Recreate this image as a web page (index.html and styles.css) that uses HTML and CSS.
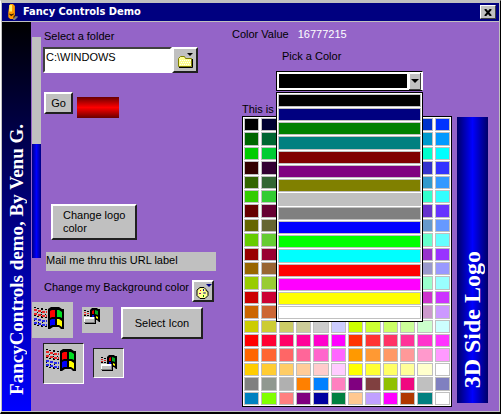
FILE: index.html
```html
<!DOCTYPE html>
<html lang="en">
<head>
<meta charset="utf-8">
<title>Fancy Controls Demo</title>
<link rel="stylesheet" href="styles.css">
</head>
<body>
<svg class="defs" aria-hidden="true">
  <symbol id="flag" viewBox="0 0 32 24">
    <g fill="none" shape-rendering="crispEdges">
      <path stroke="#000" stroke-dasharray="2 2" d="M1 1.500h4M4 2.500h7M8 3.500h7M1 9.500h4M4 10.500h7M8 11.500h7M1 18.500h4M4 19.500h7M8 20.500h7"/>
      <path stroke="#000" stroke-dasharray="1 3" d="M1 4.500h4M4 6.500h7M8 8.500h7M1 14.500h4M5 16.500h7M9 18.500h6"/>
      <path stroke="#e82828" stroke-width="2" stroke-dasharray="3 1" d="M1 4h3M5 5h4M9 6h5M1 8h3M5 9h4M9 10h5"/>
      <path stroke="#2828e8" stroke-width="2" stroke-dasharray="3 1" d="M1 13h3M5 14h4M9 15h5M1 17h3M5 18h4M9 19h5"/>
    </g>
    <path fill="#000" d="M15 3l3-2h8l3 2h2v20h-3l-2-2h-6l-3 2h-2z"/>
    <path fill="#f00" d="M17 5l2-1h3v7h-3l-2 1z"/>
    <path fill="#0d2" d="M24 4h2l3 2v6l-2-1h-3z"/>
    <path fill="#00f" d="M17 14l2-1h3v6h-3l-2 1z"/>
    <path fill="#ff0" d="M24 13h2l3 2v6l-3-2h-2z"/>
  </symbol>
  <symbol id="drive" viewBox="0 0 17 17">
    <g fill="none" shape-rendering="crispEdges">
      <path stroke="#000" stroke-dasharray="2 1" d="M1 2.500h3M4 3.500h4M1 7.500h7"/>
      <path stroke="#e02020" stroke-dasharray="2 1" d="M1 4.500h3M4 5.500h4M1 6.500h3"/>
    </g>
    <path fill="#000" d="M7 2l2-2h5l1 1h2v13h-1l-2-2h-2V9H7z"/>
    <path fill="#d00" d="M9 3l2-1v4H9z"/>
    <path fill="#0a2" d="M12 2l3 1v4l-3-1z"/>
    <path fill="#00d" d="M9 7h2v2H9z"/>
    <path fill="#ff0" d="M13 8l2 1v2l-2-1z"/>
    <g shape-rendering="crispEdges">
      <path fill="#000" d="M2 10h11v6H2z"/>
      <path fill="#808080" d="M1 9h11v6H1z"/>
      <path fill="#fff" d="M1 9h10v5H1z"/>
      <path fill="#c0c0c0" d="M2 11h9v3H2z"/>
    </g>
  </symbol>
</svg>
<main class="window">
  <header class="titlebar">
    <svg class="app-icon" viewBox="0 0 12 17" aria-hidden="true">
      <path fill="#808080" d="M7 13h4v1l-3 3H6z"/>
      <path fill="#f90" d="M2 2l1-2h3l2 2v11l-2 3H3l-2-2V9z"/>
      <path fill="#fe6" d="M2 1h3v7H2z"/>
      <path fill="#402000" d="M2 10l2 1 3-1v1l-3 2-2-2zM7 12h1v2l-2 1z"/>
    </svg>
    <h1>Fancy Controls Demo</h1>
    <button class="close" type="button" aria-label="Close">
      <svg viewBox="0 0 8 7" aria-hidden="true"><path d="M1 0l6 7M7 0L1 7" stroke="#000" stroke-width="2"/></svg>
    </button>
  </header>
  <div class="client">
    <aside class="logo logo-left"><span>FancyControls demo, By Venu G.</span></aside>
    <div class="gauge"><div class="gauge-fill"></div></div>
    <section class="left">
      <label for="folder">Select a folder</label>
      <div class="folder-row">
        <input id="folder" type="text" value="C:\WINDOWS">
        <button class="raised browse" type="button" aria-label="Browse">
          <svg viewBox="0 0 17 17" aria-hidden="true">
            <path fill="#ffff90" stroke="#808000" d="M1.500 6.500l2-2h4l1 2h6v8h-13z"/>
            <path fill="none" stroke="#000" d="M2 15.500h13.500V7"/>
            <path stroke="#fff" stroke-dasharray="1 1" d="M3 8.500h11M4 10.500h10M3 12.500h11"/>
            <path fill="#000" d="M10 1h6l-3 3z"/>
          </svg>
        </button>
      </div>
      <div class="go-row">
        <button class="raised go" type="button">Go</button>
        <div class="red-bar"></div>
      </div>
      <button class="raised change-logo" type="button">Change logo<br>color</button>
      <a class="url" href="#mail">Mail me thru this URL label</a>
      <div class="background-row">
        <label for="background">Change my Background color</label>
        <button class="raised palette-button" id="background" type="button">
          <svg viewBox="0 0 17 17" aria-hidden="true">
            <path fill="#ffff90" stroke="#000" d="M5 4.500h4l2 2v1l2 1v4l-3 3H5l-3-3V7z"/>
            <path fill="#000080" d="M11 1h6l-3 3z"/>
            <path fill="#f00" d="M5 7h1v1H5z"/><path fill="#00a" d="M8 6h1v2H8z"/>
            <path fill="#080" d="M8 12h1v2H8z"/><path fill="#808" d="M4 10h2v1H4z"/>
            <path fill="#fff" stroke="#808080" d="M8.500 9.500h2v1h-2z"/>
          </svg>
        </button>
      </div>
      <div class="icon-area">
        <div class="icon-row">
          <div class="tile large"><svg><use href="#flag"/></svg></div>
          <div class="tile small"><svg><use href="#drive"/></svg></div>
          <button class="raised select-icon" type="button">Select Icon</button>
        </div>
        <div class="icon-row pressed-row">
          <div class="tile large pressed"><svg><use href="#flag"/></svg></div>
          <div class="tile small pressed"><svg><use href="#drive"/></svg></div>
        </div>
      </div>
    </section>
    <section class="right">
      <p class="value">Color Value <output>16777215</output></p>
      <label class="pick" for="color">Pick a Color</label>
      <div class="combo">
        <select id="color"><option>Black</option></select>
        <svg class="arrow" viewBox="0 0 12 17" aria-hidden="true">
          <path fill="#c0c0c0" d="M0 0h12v17H0z"/>
          <path stroke="#fff" fill="none" d="M.5 16V.5H11"/>
          <path stroke="#404040" fill="none" d="M0 16.500h11.500V0"/>
          <path fill="#000" d="M2 6h8l-4 4z"/>
        </svg>
        <ul class="drop" id="drop"></ul>
      </div>
      <p class="caption">This is</p>
      <div class="palette" id="palette"></div>
    </section>
    <aside class="logo logo-right"><span>3D Side Logo</span></aside>
  </div>
</main>
<script src="script.js"></script>
</body>
</html>
```
FILE: styles.css
```css
* { box-sizing: border-box; }

body {
  margin: 0;
  background: #c0c0c0;
  color: #000;
  font: 11px/14px "Liberation Sans", Arial, sans-serif;
}

h1, p, ul { margin: 0; padding: 0; }
ul { list-style: none; }
button, input, select { font: inherit; color: inherit; }
svg { display: block; }
.defs { display: none; }

.window {
  display: flex;
  flex-direction: column;
  min-height: 100vh;
  padding: 1px 1px 0 0;
  border: 1px solid #c0c0c0;
  border-right-color: #000;
  border-bottom: 2px solid #000;
  border-left-color: #fff;
}

.titlebar {
  display: flex;
  align-items: center;
  height: 18px;
  margin: 1px 0 1px 1px;
  padding: 0 3px 0 5px;
  background: #000080;
  color: #fff;
}

.app-icon { width: 12px; height: 16px; margin-right: 4px; }
.titlebar h1 { flex: 1; font: bold 11px/18px "DejaVu Sans Condensed", sans-serif; }

.close {
  display: grid;
  place-items: center;
  width: 16px;
  height: 14px;
  padding: 0;
  background: #c0c0c0;
  border: 1px solid;
  border-color: #fff #404040 #404040 #fff;
}
.close svg { width: 8px; height: 7px; }

.client {
  display: flex;
  flex: 1;
  margin-left: 1px;
  border-bottom: 1px solid #c0c0c0;
  background: #9464c8;
}

.logo {
  display: flex;
  align-items: center;
  justify-content: flex-end;
  color: #fff;
  font-family: "Liberation Serif", serif;
  font-weight: bold;
  writing-mode: vertical-rl;
}
.logo span { transform: rotate(180deg); white-space: nowrap; }
.logo-left {
  width: 29px;
  padding-bottom: 16px;
  background: linear-gradient(#000, #00f);
  font-size: 19px;
  line-height: 29px;
}
.logo-right {
  align-self: flex-start;
  width: 31px;
  height: 286px;
  margin: 95px 11px 0 5px;
  padding-bottom: 15px;
  background: linear-gradient(90deg, #000068, #00f 50%, #000068);
  font-size: 24px;
  line-height: 31px;
}

.gauge {
  display: flex;
  flex-direction: column;
  justify-content: flex-end;
  align-self: flex-start;
  width: 9px;
  height: 221px;
  margin: 15px 0 0 1px;
  background: #c0c0c0;
}
.gauge-fill { height: 114px; background: linear-gradient(90deg, #000080, #00f, #000080); }

.left {
  display: flex;
  flex-direction: column;
  align-items: flex-start;
  width: 182px;
  padding: 7px 0 0 2px;
}
.left label { padding-left: 1px; }

.raised {
  padding: 0;
  background: #c0c0c0;
  border: 2px solid;
  border-color: #fff #202020 #202020 #fff;
}

.folder-row { display: flex; margin-top: 4px; }
.folder-row input {
  width: 129px;
  height: 26px;
  padding: 0 0 6px 1px;
  border: 2px solid;
  border-color: #404040 #fff #fff #404040;
  border-radius: 0;
  background: #fff;
}
.browse { display: grid; place-items: center; width: 26px; height: 26px; }
.browse svg, .palette-button svg { width: 17px; height: 17px; }

.go-row { display: flex; align-items: flex-end; margin-top: 19px; gap: 4px; padding-left: 1px; }
.go { width: 29px; height: 22px; margin-bottom: 4px; }
.red-bar { width: 42px; height: 21px; background: linear-gradient(#680000, #f00, #680000); }

.change-logo {
  width: 86px;
  height: 36px;
  margin: 86px 0 12px 8px;
  padding-left: 10px;
  line-height: 13px;
  text-align: left;
}

.url {
  width: 170px;
  height: 19px;
  margin-left: 3px;
  background: #c0c0c0;
  color: #000;
  line-height: 16px;
  text-decoration: none;
}

.background-row { display: flex; width: 171px; justify-content: space-between; margin-top: 9px; }
.background-row label { white-space: nowrap; }
.palette-button { display: grid; place-items: center; width: 22px; height: 22px; }

.icon-area { margin-left: -11px; }
.icon-row { display: flex; align-items: flex-start; }
.tile { display: grid; place-items: start; background: #c0c0c0; }
.large { width: 41px; height: 36px; padding: 4px 0 0 1px; }
.large svg { width: 32px; height: 24px; }
.small { width: 31px; height: 26px; margin: 5px 8px 0 9px; padding: 1px; }
.small svg { width: 17px; height: 17px; }
.select-icon { width: 82px; height: 32px; margin-top: 5px; }
.pressed { border: 1px solid; border-color: #202020 #fff #fff #202020; }
.pressed-row { margin: 4px 0 0 11px; }
.pressed-row .large { height: 41px; }
.pressed-row .small { height: 30px; place-items: center; }

.right { flex: 1; min-width: 0; padding: 5px 0 0 8px; margin-left: 11px; }
.value { margin-left: -10px; }
.value output { margin-left: 6px; color: #fff; }
.pick { display: block; margin: 8px 0 0 40px; }

.combo { position: relative; width: 147px; margin: 8px 0 0 34px; }
.combo select {
  display: block;
  appearance: none;
  width: 147px;
  height: 20px;
  padding: 0;
  border: 1px solid #000;
  border-right-color: #fff;
  border-radius: 0;
  outline: 2px solid #fff;
  outline-offset: -3px;
  background: #000;
}
.arrow { position: absolute; top: 2px; right: 2px; width: 14px; height: 17px; border-left: 2px solid #fff; }
.drop {
  position: absolute;
  top: 21px;
  left: 0;
  z-index: 1;
  display: grid;
  grid-template-rows: repeat(16, 1fr);
  width: 147px;
  height: 230px;
  padding: 1px;
  border: 1px solid #000;
  background: #fff;
}
.drop li { margin-bottom: 1px; border: 1px solid #c0c0c0; }

.caption { margin-top: 11px; }
.palette {
  display: grid;
  grid-template-columns: repeat(12, 1fr);
  grid-template-rows: repeat(20, 1fr);
  gap: 1px 2px;
  height: 291px;
  padding: 1px;
  border: 1px solid #000;
  background: #fff;
}
.palette button {
  min-width: 0;
  padding: 0;
  border: 1px solid #c0c0c0;
}
```
FILE: script.js
```js
const steps = ["00", "33", "66", "99", "cc", "ff"];
const extras = [
  "808080", "909890", "b0b0b0", "ff8000", "0080ff", "ff80c0", "800080", "804040", "90c000", "f00880", "c0c0c0", "8080c0",
  "0080c0", "80ff00", "ff8080", "800080", "0000a0", "008040", "ffc890", "c0a0ff", "ff00ff", "b03800", "008080", "ffffff"
];
const basics = [
  "000000", "000080", "008000", "008080", "800000", "800080", "808000", "c0c0c0",
  "808080", "0000ff", "00ff00", "00ffff", "ff0000", "ff00ff", "ffff00", "ffffff"
];

const colors = [];
for (const r of steps) {
  for (const g of steps) {
    for (const b of steps) colors.push(r + g + b);
  }
}
colors.push(...extras);

const palette = document.getElementById("palette");
for (const color of colors) {
  const swatch = document.createElement("button");
  swatch.type = "button";
  swatch.ariaLabel = "#" + color;
  swatch.style.backgroundColor = "#" + color;
  palette.append(swatch);
}

const drop = document.getElementById("drop");
for (const color of basics) {
  const item = document.createElement("li");
  item.style.backgroundColor = "#" + color;
  drop.append(item);
}
```
